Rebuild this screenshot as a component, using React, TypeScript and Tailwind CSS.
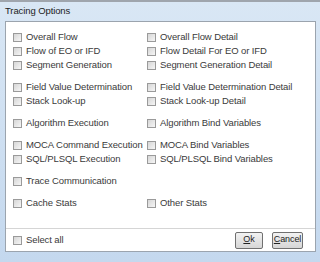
const groups: [string, string][][] = [
  [
    ["Overall Flow", "Overall Flow Detail"],
    ["Flow of EO or IFD", "Flow Detail For EO or IFD"],
    ["Segment Generation", "Segment Generation Detail"],
  ],
  [
    ["Field Value Determination", "Field Value Determination Detail"],
    ["Stack Look-up", "Stack Look-up Detail"],
  ],
  [["Algorithm Execution", "Algorithm Bind Variables"]],
  [
    ["MOCA Command Execution", "MOCA Bind Variables"],
    ["SQL/PLSQL Execution", "SQL/PLSQL Bind Variables"],
  ],
  [["Trace Communication", ""]],
  [["Cache Stats", "Other Stats"]],
]

function Check({ label }: { label: string }) {
  if (!label) return <div />
  return (
    <div className="flex h-[14px] items-center gap-[4px]">
      <span className="h-[9px] w-[9px] shrink-0 border border-[#9a9a9a] bg-gradient-to-br from-[#d6d6d6] to-[#f6f6f6]" />
      <span className="whitespace-nowrap">{label}</span>
    </div>
  )
}

export default function App() {
  return (
    <div
      className="flex h-[262px] w-[320px] flex-col border-t-2 border-[#9fa5ad] bg-gradient-to-b from-[#d9e7f5] to-[#c4d8ee] text-[9.5px] tracking-[-0.1px] text-[#3a3a3a]"
      style={{ fontFamily: '"Liberation Sans", Arial, sans-serif' }}
    >
      <div className="flex h-[19px] items-center pl-[5px] text-[9.5px] tracking-[-0.1px] text-[#1c1c1c]">
        Tracing Options
      </div>
      <div className="mb-[10px] ml-[5px] mr-[4px] flex flex-1 flex-col border border-[#9ba4ae] bg-white">
        <div className="flex flex-col gap-[8px] pl-[7px] pt-[8px]">
          {groups.map((g, i) => (
            <div key={i} className="flex flex-col">
              {g.map(([a, b]) => (
                <div key={a} className="grid grid-cols-[134px_1fr]">
                  <Check label={a} />
                  <Check label={b} />
                </div>
              ))}
            </div>
          ))}
        </div>
        <div className="mt-auto flex h-[23px] items-center justify-between border-t border-[#d5d5d5] pl-[7px] pr-[12px]">
          <Check label="Select all" />
          <div className="flex gap-[9px]">
            <button className="flex h-[17px] w-[28px] items-center justify-center rounded-[2px] border border-[#707070] bg-gradient-to-b from-[#f2f2f2] to-[#d6d6d6] text-[9px] text-[#222]">
              <span className="underline">O</span>k
            </button>
            <button className="flex h-[17px] w-[31px] items-center justify-center rounded-[2px] border border-[#707070] bg-gradient-to-b from-[#f2f2f2] to-[#d6d6d6] text-[9px] text-[#222]">
              <span className="underline">C</span>ancel
            </button>
          </div>
        </div>
      </div>
    </div>
  )
}
